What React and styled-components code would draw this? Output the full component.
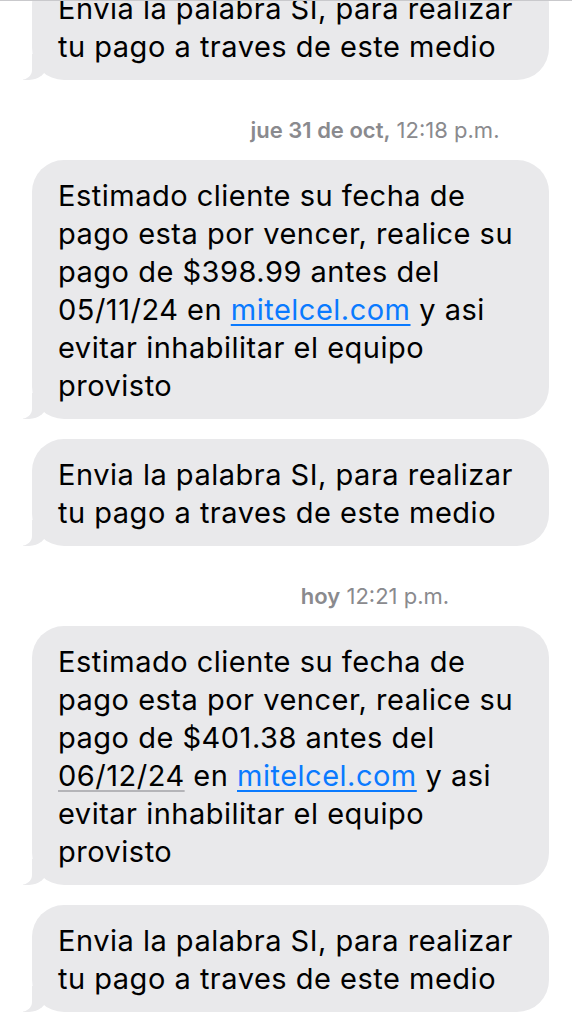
import React from 'react';
import styled, { createGlobalStyle } from 'styled-components';

const GlobalStyle = createGlobalStyle`
  html, body {
    margin: 0;
    padding: 0;
    background: #ffffff;
  }
  body {
    font-family: 'Inter', 'Liberation Sans', sans-serif;
    -webkit-font-smoothing: antialiased;
  }
`;

const Screen = styled.div`
  width: 572px;
  height: 1027px;
  overflow: hidden;
  background: #ffffff;
  border-top: 1px solid #c9c9cc;
  box-sizing: border-box;
`;

const Thread = styled.div`
  display: flex;
  flex-direction: column;
  margin-top: ${(p) => p.offset}px;
`;

const Bubble = styled.div`
  position: relative;
  width: 517px;
  box-sizing: border-box;
  margin-left: 32px;
  margin-top: ${(p) => (p.first ? 0 : 20)}px;
  padding: 17px 18px 14px 26px;
  background: #e9e9eb;
  border-radius: 32px;
  color: #000000;
  font-size: 29px;
  line-height: 38px;
  letter-spacing: 0.5px;

  &::before {
    content: '';
    position: absolute;
    z-index: 0;
    left: -9px;
    bottom: 0;
    width: 24px;
    height: 26px;
    background: #e9e9eb;
    border-bottom-right-radius: 18px 15px;
  }
  &::after {
    content: '';
    position: absolute;
    z-index: 1;
    left: -26px;
    bottom: 0;
    width: 26px;
    height: 28px;
    background: #ffffff;
    border-bottom-right-radius: 11px 10px;
  }
`;

const Line = styled.div`
  white-space: nowrap;
`;

const Link = styled.span`
  color: #0a7aff;
  text-decoration: underline;
  text-decoration-thickness: 1.5px;
  text-underline-offset: 4px;
`;

const DateText = styled.span`
  text-decoration: underline;
  text-decoration-color: #b4b4b8;
  text-decoration-thickness: 1.5px;
  text-underline-offset: 4px;
`;

const Stamp = styled.div`
  margin: 35px 0 15px;
  padding-left: 178px;
  text-align: center;
  font-size: 22px;
  line-height: 30px;
  color: #8a8a8e;
  white-space: nowrap;
`;

const StampDay = styled.span`
  font-weight: 600;
`;

const Reminder = ({ first }) => (
  <Bubble first={first}>
    <Line>Envia la palabra SI, para realizar</Line>
    <Line>tu pago a traves de este medio</Line>
  </Bubble>
);

const Notice = ({ amount, date, dateStyled }) => (
  <Bubble first>
    <Line>Estimado cliente su fecha de</Line>
    <Line>pago esta por vencer, realice su</Line>
    <Line>pago de {amount} antes del</Line>
    <Line>
      {dateStyled ? <DateText>{date}</DateText> : date} en <Link>mitelcel.com</Link> y asi
    </Line>
    <Line>evitar inhabilitar el equipo</Line>
    <Line>provisto</Line>
  </Bubble>
);

const App = () => (
  <Screen>
    <GlobalStyle />
    <Thread offset={-28}>
      <Reminder first />
      <Stamp>
        <StampDay>jue 31 de oct,</StampDay> 12:18 p.m.
      </Stamp>
      <Notice amount="$398.99" date="05/11/24" />
      <Reminder />
      <Stamp>
        <StampDay>hoy</StampDay> 12:21 p.m.
      </Stamp>
      <Notice amount="$401.38" date="06/12/24" dateStyled />
      <Reminder />
    </Thread>
  </Screen>
);

export default App;
